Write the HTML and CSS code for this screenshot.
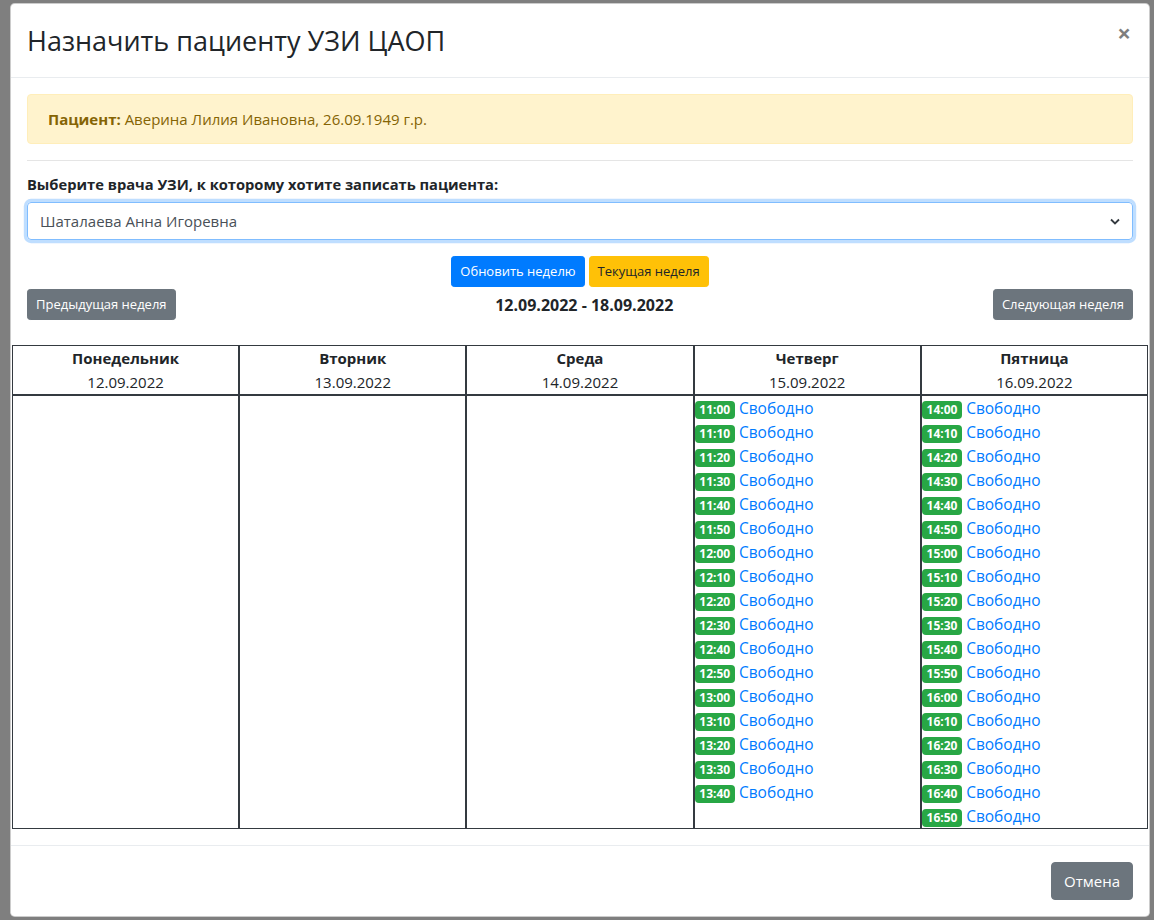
FILE: index.html
```html
<!DOCTYPE html>
<html lang="ru">
<head>
<meta charset="utf-8">
<title>Назначить пациенту УЗИ ЦАОП</title>
<link rel="stylesheet" href="styles.css">
</head>
<body>
<div class="modal">
  <div class="modal-header">
    <h2 class="modal-title">Назначить пациенту УЗИ ЦАОП</h2>
    <span class="close">×</span>
  </div>
  <div class="modal-body">
    <div class="alert"><b>Пациент:</b> Аверина Лилия Ивановна, 26.09.1949 г.р.</div>
    <hr class="divider">
    <div class="label">Выберите врача УЗИ, к которому хотите записать пациента:</div>
    <div class="select">
      <span>Шаталаева Анна Игоревна</span>
      <svg class="chev" width="10" height="7" viewBox="0 0 10 7"><path d="M1 1.5 L5 5.5 L9 1.5" fill="none" stroke="#343a40" stroke-width="1.8"/></svg>
    </div>
    <div class="week-actions">
      <span class="btn btn-sm btn-primary">Обновить неделю</span>
      <span class="btn btn-sm btn-warning">Текущая неделя</span>
    </div>
    <div class="week-nav">
      <span class="btn btn-sm btn-secondary">Предыдущая неделя</span>
      <span class="week-range">12.09.2022 - 18.09.2022</span>
      <span class="btn btn-sm btn-secondary">Следующая неделя</span>
    </div>
    <table class="schedule">
      <thead>
        <tr>
          <th><b>Понедельник</b><br>12.09.2022</th>
          <th><b>Вторник</b><br>13.09.2022</th>
          <th><b>Среда</b><br>14.09.2022</th>
          <th><b>Четверг</b><br>15.09.2022</th>
          <th><b>Пятница</b><br>16.09.2022</th>
        </tr>
      </thead>
      <tbody>
        <tr>
          <td></td>
          <td></td>
          <td></td>
          <td>
            <div class="slot"><span class="badge">11:00</span> <a>Свободно</a></div>
            <div class="slot"><span class="badge">11:10</span> <a>Свободно</a></div>
            <div class="slot"><span class="badge">11:20</span> <a>Свободно</a></div>
            <div class="slot"><span class="badge">11:30</span> <a>Свободно</a></div>
            <div class="slot"><span class="badge">11:40</span> <a>Свободно</a></div>
            <div class="slot"><span class="badge">11:50</span> <a>Свободно</a></div>
            <div class="slot"><span class="badge">12:00</span> <a>Свободно</a></div>
            <div class="slot"><span class="badge">12:10</span> <a>Свободно</a></div>
            <div class="slot"><span class="badge">12:20</span> <a>Свободно</a></div>
            <div class="slot"><span class="badge">12:30</span> <a>Свободно</a></div>
            <div class="slot"><span class="badge">12:40</span> <a>Свободно</a></div>
            <div class="slot"><span class="badge">12:50</span> <a>Свободно</a></div>
            <div class="slot"><span class="badge">13:00</span> <a>Свободно</a></div>
            <div class="slot"><span class="badge">13:10</span> <a>Свободно</a></div>
            <div class="slot"><span class="badge">13:20</span> <a>Свободно</a></div>
            <div class="slot"><span class="badge">13:30</span> <a>Свободно</a></div>
            <div class="slot"><span class="badge">13:40</span> <a>Свободно</a></div>
          </td>
          <td>
            <div class="slot"><span class="badge">14:00</span> <a>Свободно</a></div>
            <div class="slot"><span class="badge">14:10</span> <a>Свободно</a></div>
            <div class="slot"><span class="badge">14:20</span> <a>Свободно</a></div>
            <div class="slot"><span class="badge">14:30</span> <a>Свободно</a></div>
            <div class="slot"><span class="badge">14:40</span> <a>Свободно</a></div>
            <div class="slot"><span class="badge">14:50</span> <a>Свободно</a></div>
            <div class="slot"><span class="badge">15:00</span> <a>Свободно</a></div>
            <div class="slot"><span class="badge">15:10</span> <a>Свободно</a></div>
            <div class="slot"><span class="badge">15:20</span> <a>Свободно</a></div>
            <div class="slot"><span class="badge">15:30</span> <a>Свободно</a></div>
            <div class="slot"><span class="badge">15:40</span> <a>Свободно</a></div>
            <div class="slot"><span class="badge">15:50</span> <a>Свободно</a></div>
            <div class="slot"><span class="badge">16:00</span> <a>Свободно</a></div>
            <div class="slot"><span class="badge">16:10</span> <a>Свободно</a></div>
            <div class="slot"><span class="badge">16:20</span> <a>Свободно</a></div>
            <div class="slot"><span class="badge">16:30</span> <a>Свободно</a></div>
            <div class="slot"><span class="badge">16:40</span> <a>Свободно</a></div>
            <div class="slot"><span class="badge">16:50</span> <a>Свободно</a></div>
          </td>
        </tr>
      </tbody>
    </table>
  </div>
  <div class="modal-footer">
    <span class="btn btn-secondary">Отмена</span>
  </div>
</div>
</body>
</html>
```
FILE: styles.css
```css
* { box-sizing: border-box; }
html, body { height: 100%; }
body {
  margin: 0;
  background: #7f7f7f;
  font-family: "Segoe UI", "Open Sans", "Noto Sans", sans-serif;
  font-size: 15px;
  line-height: 24px;
  color: #212529;
  padding-top: 3px;
}
.modal {
  margin-left: 10px;
  width: 1140px;
  background: #fff;
  border: 1px solid rgba(0,0,0,.2);
  border-radius: 4.8px;
}
.modal-header {
  display: flex;
  justify-content: space-between;
  align-items: flex-start;
  padding: 16px;
  border-bottom: 1px solid #e9ecef;
}
.modal-title {
  margin: 0;
  font-size: 27px;
  font-weight: 400;
  line-height: 41px;
}
.close {
  font-size: 24px;
  font-weight: 700;
  line-height: 1;
  color: #000;
  opacity: .5;
  margin-top: 1px;
  margin-right: 2px;
}
.modal-body {
  padding: 16px;
}
.alert {
  padding: 12px 20px;
  background: #fff3cd;
  border: 1px solid #ffeeba;
  color: #856404;
  border-radius: 4px;
  margin-bottom: 16px;
}
.divider {
  margin: 0 0 11px;
  border: 0;
  border-top: 1px solid rgba(0,0,0,.1);
}
.label {
  font-weight: 700;
  font-size: 14.7px;
  line-height: 24px;
  margin-bottom: 6px;
}
.select {
  display: flex;
  justify-content: space-between;
  align-items: center;
  height: 38px;
  padding: 6px 12px;
  border: 1px solid #80bdff;
  border-radius: 4px;
  box-shadow: 0 0 0 3.2px rgba(0,123,255,.25);
  color: #495057;
  margin-bottom: 16px;
}
.week-actions {
  display: flex;
  justify-content: center;
  gap: 4px;
  margin-bottom: 2px;
}
.week-nav {
  display: flex;
  justify-content: space-between;
  align-items: center;
  margin-bottom: 25px;
}
.week-range { font-weight: 700; font-size: 16px; }
.btn {
  display: inline-block;
  border: 1px solid transparent;
  border-radius: 4px;
  padding: 6px 12px;
  font-size: 15px;
  line-height: 24px;
  text-align: center;
  white-space: nowrap;
}
.btn-sm {
  padding: 4px 8px;
  font-size: 13px;
  line-height: 21px;
  border-radius: 3.2px;
}
.btn-primary { background: #007bff; border-color: #007bff; color: #fff; }
.btn-warning { background: #ffc107; border-color: #ffc107; color: #212529; }
.btn-secondary { background: #6c757d; border-color: #6c757d; color: #fff; }
.schedule {
  width: calc(100% + 30px);
  margin: 0 -15px;
  border-collapse: separate;
  border-spacing: 0;
  table-layout: fixed;
  font-size: 15px;
}
.schedule th, .schedule td {
  border: 1px solid #343a40;
  padding: 0;
}
.schedule th {
  text-align: center;
  font-weight: 400;
  line-height: 24px;
}
.schedule td { vertical-align: top; }
.slot { line-height: 24px; white-space: nowrap; }
.badge {
  display: inline-block;
  background: #28a745;
  color: #fff;
  font-size: 12px;
  font-weight: 700;
  line-height: 1;
  padding: 3px 4.8px;
  border-radius: 4px;
  vertical-align: baseline;
}
.slot a { color: #007bff; font-size: 15.5px; }
.modal-footer {
  display: flex;
  justify-content: flex-end;
  padding: 16px;
  border-top: 1px solid #e9ecef;
}
```
